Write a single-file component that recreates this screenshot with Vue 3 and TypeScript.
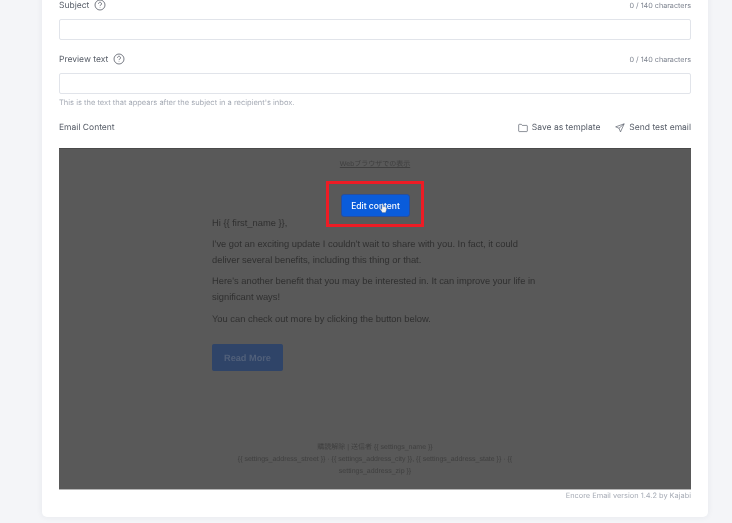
<template>
  <div class="page">
    <section class="card">
      <div class="field-head">
        <span class="label">Subject<svg class="help" viewBox="0 0 12 12"><circle cx="6" cy="6" r="5" /><path d="M4.500 4.700a1.500 1.500 0 1 1 2.300 1.300c-.5.3-.8.6-.8 1.100" /><path d="M6 8.600v.4" /></svg></span>
        <span class="count">0 / 140 characters</span>
      </div>
      <input class="text-input" type="text" />

      <div class="field-head second">
        <span class="label">Preview text<svg class="help" viewBox="0 0 12 12"><circle cx="6" cy="6" r="5" /><path d="M4.500 4.700a1.500 1.500 0 1 1 2.300 1.300c-.5.3-.8.6-.8 1.100" /><path d="M6 8.600v.4" /></svg></span>
        <span class="count">0 / 140 characters</span>
      </div>
      <input class="text-input" type="text" />
      <p class="hint">This is the text that appears after the subject in a recipient's inbox.</p>

      <div class="content-head">
        <span class="label">Email Content</span>
        <div class="actions">
          <a class="action">
            <svg viewBox="0 0 12 12"><path d="M.8 2.300c0-.4.3-.7.7-.7h2.600l1 1.300h5.400c.4 0 .7.3.7.7v6c0 .4-.3.7-.7.7h-9c-.4 0-.7-.3-.7-.7z" /></svg>
            Save as template
          </a>
          <a class="action">
            <svg viewBox="0 0 12 12"><path d="M11 1 .8 4.600l4 1.700 1.800 4.400zM4.800 6.300 11 1" /></svg>
            Send test email
          </a>
        </div>
      </div>

      <div class="preview">
        <a class="web-link">Webブラウザでの表示</a>
        <div class="mail">
          <p class="greet">Hi {{ '{' + '{' }} first_name {{ '}' + '}' }},</p>
          <p class="first">I've got an exciting update I couldn't wait to share with you. In fact, it could deliver several benefits, including this thing or that.</p>
          <p>Here's another benefit that you may be interested in. It can improve your life in significant ways!</p>
          <p>You can check out more by clicking the button below.</p>
          <span class="read-more">Read More</span>
        </div>
        <div class="mail-foot">
          <div>購読解除 | 送信者 {{ tag('settings_name') }}</div>
          <div>{{ tag('settings_address_street') }} · {{ tag('settings_address_city') }}, {{ tag('settings_address_state') }} · {{ '{' + '{' }}</div>
          <div>settings_address_zip {{ '}' + '}' }}</div>
        </div>

        <div class="highlight"></div>
        <button class="edit-btn" type="button">Edit content</button>
        <svg class="hand" viewBox="0 0 10 12">
          <path d="M3.200 1.200c0-.9 1.300-.9 1.300 0v3l.9-.1c.5-.1 2.400.3 2.700.8.2.4.2 2.600 0 3.300-.2.800-.8 1.500-.8 2.300H3.600c-.3-.9-1.300-2-2.200-3.300-.4-.7.400-1.300 1-.8l.8.7z" />
        </svg>
      </div>
      <div class="version">Encore Email version 1.4.2 by Kajabi</div>
    </section>
  </div>
</template>

<script setup lang="ts">
const tag = (name: string): string => `{{ ${name} }}`;
</script>

<style>
html,
body {
  margin: 0;
  overflow: hidden;
}
</style>

<style scoped>
.page {
  height: 523px;
  overflow: hidden;
  background: #f4f5f8;
  font-family: Inter, "Noto Sans CJK JP", sans-serif;
  text-rendering: geometricPrecision;
  filter: blur(0.35px);
}
.card {
  box-sizing: border-box;
  width: 666px;
  height: 537px;
  margin: -20px 0 0 42px;
  padding: 20px 17px 0;
  background: #fff;
  border-radius: 5px;
  box-shadow: 0 0 6px rgba(40, 50, 80, 0.07);
}
.field-head {
  display: flex;
  justify-content: space-between;
  align-items: center;
  height: 11px;
  margin-bottom: 8px;
}
.field-head.second {
  margin-top: 14px;
}
.label {
  display: inline-flex;
  align-items: center;
  padding-top: 1px;
  font-size: 8.5px;
  color: #555b66;
}
.help {
  width: 12px;
  height: 12px;
  margin-left: 5px;
  margin-top: -3px;
  fill: none;
  stroke: #555b66;
  stroke-width: 0.8;
}
.count {
  font-size: 7.2px;
  color: #7d838f;
}
.text-input {
  display: block;
  box-sizing: border-box;
  width: 100%;
  height: 21px;
  padding: 0 8px;
  border: 1px solid #e1e4ea;
  border-radius: 2px;
  background: #fff;
  outline: none;
}
.hint {
  margin: 4px 0 0;
  font-size: 7.5px;
  line-height: 10px;
  color: #a6abb5;
}
.content-head {
  display: flex;
  justify-content: space-between;
  align-items: center;
  height: 12px;
  margin-top: 13px;
  margin-bottom: 15px;
}
.actions {
  display: flex;
  gap: 15px;
}
.action {
  display: inline-flex;
  align-items: center;
  gap: 4px;
  padding-top: 1px;
  font-size: 8.5px;
  color: #555b66;
}
.action svg {
  width: 10px;
  height: 10px;
  fill: none;
  stroke: #555b66;
  stroke-width: 0.8;
}
.preview {
  position: relative;
  height: 342px;
  background: #595959;
  border-bottom: 1px solid #b5b5b5;
  border-top: 1px solid #4a4a4a;
  box-sizing: border-box;
  display: flex;
  flex-direction: column;
  align-items: center;
  font-family: "Liberation Sans", "Noto Sans CJK JP", sans-serif;
  color: #303030;
}
.web-link {
  margin-top: 11px;
  font-size: 7px;
  line-height: 10px;
  color: #3f3f3f;
  text-decoration: underline;
}
.mail {
  box-sizing: border-box;
  width: 326px;
  margin-top: 45px;
  font-size: 9.35px;
  line-height: 16px;
}
.mail p {
  margin: 0 0 6px;
}
.mail .greet {
  margin-bottom: 5px;
}
.mail .first {
  margin-bottom: 5px;
}
.read-more {
  display: flex;
  align-items: center;
  justify-content: center;
  width: 71px;
  height: 27px;
  margin-top: 17px;
  border-radius: 2px;
  background: #2f4468;
  color: #51607a;
  font-size: 9.2px;
  font-weight: 700;
}
.mail-foot {
  margin-top: 71px;
  font-size: 7px;
  line-height: 12px;
  text-align: center;
  color: #3f3f3f;
}
.highlight {
  position: absolute;
  left: 267px;
  top: 32px;
  width: 98px;
  height: 46px;
  box-sizing: border-box;
  border: 3px solid #ee1c25;
}
.edit-btn {
  position: absolute;
  left: 282px;
  top: 45px;
  width: 69px;
  height: 23px;
  padding: 0;
  border: 1px solid #2a4f9a;
  border-radius: 3px;
  background: #0a5cdb;
  color: #fff;
  font-family: Inter, sans-serif;
  font-size: 8.5px;
  font-weight: 500;
}
.hand {
  position: absolute;
  left: 320px;
  top: 54px;
  width: 9px;
  height: 11px;
  fill: #f1f1f1;
  stroke: #666;
  stroke-width: 0.3;
}
.version {
  margin-top: 1px;
  text-align: right;
  font-size: 7.4px;
  line-height: 10px;
  color: #a6abb5;
}
</style>
